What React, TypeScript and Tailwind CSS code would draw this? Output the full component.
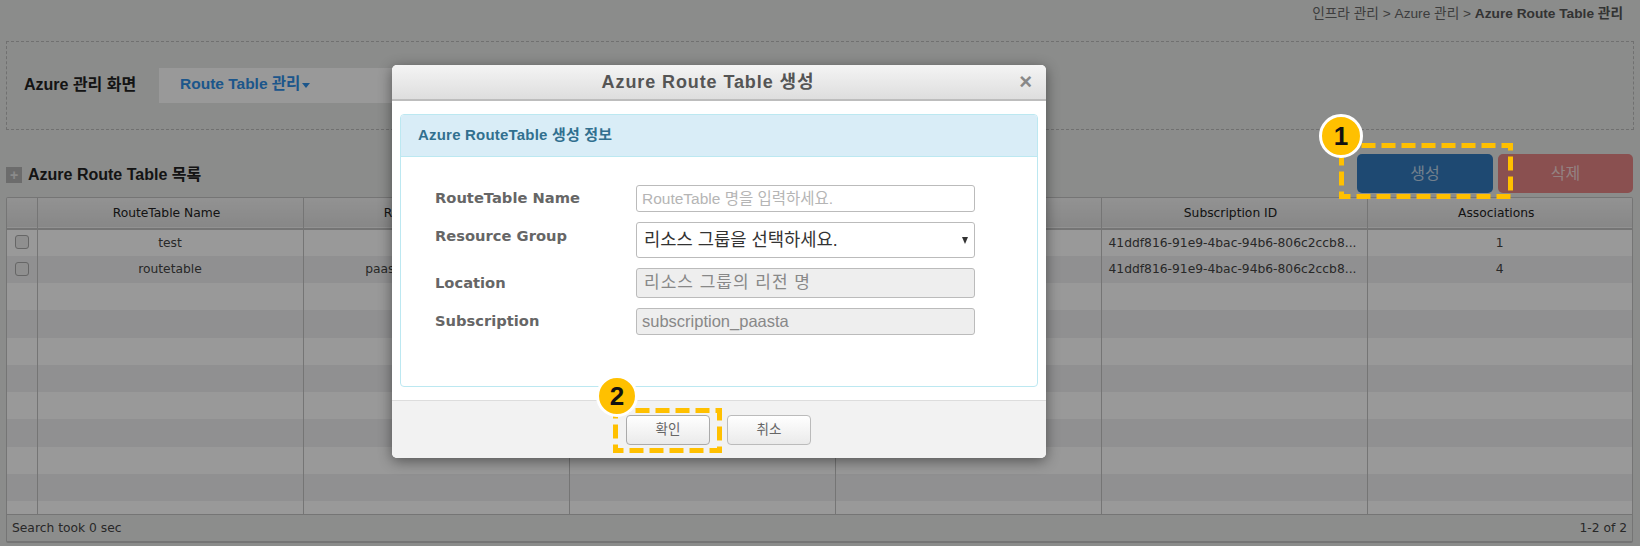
const columns = ['RouteTable Name', 'Resource Group', 'Location', 'Routes', 'Subscription ID', 'Associations'];

const rows = [
  { name: 'test', group: 'test-rg', subscription: '41ddf816-91e9-4bac-94b6-806c2ccb8...', associations: '1' },
  { name: 'routetable', group: 'paas-platform-rg-korea', subscription: '41ddf816-91e9-4bac-94b6-806c2ccb8...', associations: '4' },
];

const emptyRows = Array.from({ length: 9 }, (_, i) => i);

function Marker({ label, className }: { label: string; className: string }) {
  return (
    <div
      className={`absolute flex items-center justify-center rounded-full border-[3px] border-white bg-[#ffc000] text-[26px] font-bold leading-none text-[#111] font-['Liberation_Sans',sans-serif] ${className}`}
    >
      {label}
    </div>
  );
}

function DashedBox({ className, width, height }: { className: string; width: number; height: number }) {
  return (
    <svg className={`absolute ${className}`} width={width} height={height} fill="none">
      <rect x="2.5" y="2.5" width={width - 5} height={height - 5} stroke="#ffc000" strokeWidth="5" strokeDasharray="14 6" />
    </svg>
  );
}

function FormRow({ label, labelClass = '', children }: { label: string; labelClass?: string; children: React.ReactNode }) {
  return (
    <div className="flex items-center">
      <label className={`w-[201px] text-[14.7px] font-bold text-[#666] font-['DejaVu_Sans',sans-serif] ${labelClass}`}>{label}</label>
      {children}
    </div>
  );
}

export default function App() {
  return (
    <div className="relative h-[546px] w-[1640px] overflow-hidden bg-[#e8eae8] px-[6px] font-['DejaVu_Sans','Noto_Sans_CJK_KR',sans-serif]">
      {/* Breadcrumb */}
      <div className="h-[41px] pr-[11px] pt-[6px] text-right text-[13.7px] leading-4 text-[#666] font-['Liberation_Sans','Noto_Sans_CJK_KR',sans-serif]">
        인프라 관리 &gt; Azure 관리 &gt; <b className="text-[#555]">Azure Route Table 관리</b>
      </div>

      {/* Search box */}
      <div className="flex h-[89px] items-center border border-dashed border-[#bbb] pl-[17px] font-['Liberation_Sans','Noto_Sans_CJK_KR',sans-serif]">
        <span className="mb-[1px] w-[135px] text-[16px] font-bold text-[#222]">Azure 관리 화면</span>
        <div className="flex h-[35px] w-[860px] items-center bg-white pb-[3px] pl-[21px] text-[15.5px] font-bold text-[#3090e8]">
          Route Table 관리
          <span className="ml-[2px] mt-[3px] border-x-[4px] border-t-[5px] border-x-transparent border-t-[#3090e8]" />
        </div>
      </div>

      {/* Title and buttons */}
      <div className="flex h-[67px] items-end justify-between pb-[4px] pr-[1px] font-['Liberation_Sans','Noto_Sans_CJK_KR',sans-serif]">
        <div className="mb-[6px] flex items-center gap-[6px]">
          <span className="flex h-[16px] w-[16px] items-center justify-center bg-[#b5b5b5] text-[14px] font-bold leading-none text-[#e8e8e8]">+</span>
          <h2 className="text-[16px] font-bold text-[#222]">Azure Route Table 목록</h2>
        </div>
        <div className="flex gap-[5px]">
          <button className="h-[39px] w-[136px] rounded-[5px] bg-[#327bbf] text-[16px] text-white/70">생성</button>
          <button className="h-[39px] w-[135px] rounded-[5px] bg-[#e68585] text-[16px] text-white/70">삭제</button>
        </div>
      </div>

      {/* Table */}
      <div className="h-[346px] w-[1627px] overflow-hidden rounded-[2px] border border-b-2 border-[#c4c4c4]">
        <div className="h-[316px] overflow-hidden">
          <table className="w-full table-fixed border-collapse text-[12.3px] text-[#444]">
            <colgroup>
              <col className="w-[30px]" />
              <col className="w-[266px]" />
              <col className="w-[266px]" />
              <col className="w-[266px]" />
              <col className="w-[266px]" />
              <col className="w-[266px]" />
              <col />
            </colgroup>
            <thead>
              <tr className="h-[31px] border-b-2 border-[#c4c4c4] bg-linear-to-b from-[#f4f4f4] to-[#e2e2e2] text-[#222]">
                <th className="border-r border-[#c4c4c4]" />
                {columns.map((col) => (
                  <th key={col} className="border-r border-[#c4c4c4] pr-[7px] font-normal last:border-r-0">
                    {col}
                  </th>
                ))}
              </tr>
            </thead>
            <tbody>
              {rows.map((row, i) => (
                <tr key={row.name} className={`h-[27px] ${i % 2 ? 'bg-[#f0f1f2]' : 'bg-white'}`}>
                  <td className="border-r border-[#c4c4c4] text-center">
                    <span className="inline-block h-[14px] w-[14px] translate-y-[2px] rounded-[3px] border border-[#aaa] bg-[#eee]" />
                  </td>
                  <td className="border-r border-[#c4c4c4] text-center">{row.name}</td>
                  <td className="border-r border-[#c4c4c4] text-center">{row.group}</td>
                  <td className="border-r border-[#c4c4c4]" />
                  <td className="border-r border-[#c4c4c4]" />
                  <td className="border-r border-[#c4c4c4] pl-[7px]">{row.subscription}</td>
                  <td className="text-center">{row.associations}</td>
                </tr>
              ))}
              {emptyRows.map((i) => (
                <tr key={i} className={`h-[27.3px] ${i % 2 ? 'bg-[#f0f1f2]' : 'bg-white'}`}>
                  <td className="border-r border-[#c4c4c4]" />
                  <td className="border-r border-[#c4c4c4]" />
                  <td className="border-r border-[#c4c4c4]" />
                  <td className="border-r border-[#c4c4c4]" />
                  <td className="border-r border-[#c4c4c4]" />
                  <td className="border-r border-[#c4c4c4]" />
                  <td />
                </tr>
              ))}
            </tbody>
          </table>
        </div>
        <div className="flex h-[27px] items-center justify-between border-t border-[#c4c4c4] bg-[#eaebea] px-[5px] text-[12.3px] text-[#444]">
          <span>Search took 0 sec</span>
          <span>1-2 of 2</span>
        </div>
      </div>

      {/* Backdrop */}
      <div className="absolute inset-0 bg-black/40" />

      {/* Modal */}
      <div className="absolute left-[392px] top-[65px] flex h-[393px] w-[654px] flex-col overflow-hidden rounded-[5px] bg-white shadow-[0_3px_14px_rgba(0,0,0,0.45)] font-['Liberation_Sans','Noto_Sans_CJK_KR',sans-serif]">
        <div className="relative flex h-[36px] shrink-0 items-center justify-center border-b-2 border-[#bdbdbd] bg-linear-to-b from-[#f4f4f4] to-[#dedede] pr-[22px]">
          <h3 className="text-[18px] font-bold tracking-[0.9px] text-[#555]">Azure Route Table 생성</h3>
          <span className="absolute right-[14px] top-[5px] text-[22px] font-bold leading-6 text-[#888]">×</span>
        </div>
        <div className="flex-1 px-[8px] pt-[13px]">
          <div className="h-[273px] overflow-hidden rounded-[4px] border border-[#bce8f1]">
            <div className="flex h-[42px] items-center border-b border-[#bce8f1] bg-[#d9edf7] pl-[17px] text-[15px] font-bold tracking-[0.2px] text-[#31708f]">
              Azure RouteTable 생성 정보
            </div>
            <div className="flex flex-col gap-[10px] pl-[34px] pt-[28px]">
              <FormRow label="RouteTable Name">
                <input
                  placeholder="RouteTable 명을 입력하세요."
                  className="h-[27px] w-[339px] rounded-[3px] border border-[#bbb] px-[5px] text-[15.5px] placeholder:text-[#b5b5b5]"
                />
              </FormRow>
              <FormRow label="Resource Group" labelClass="pb-[7px]">
                <div className="flex h-[36px] w-[339px] items-center justify-between rounded-[3px] border border-[#bbb] pl-[7px] pr-[6px] text-[17.7px] text-[#333]">
                  리소스 그룹을 선택하세요.
                  <span className="border-x-[3.5px] border-t-[7px] border-x-transparent border-t-[#333]" />
                </div>
              </FormRow>
              <FormRow label="Location">
                <div className="flex h-[30px] w-[339px] items-center rounded-[3px] border border-[#bbb] bg-[#eee] pl-[7px] text-[17px] tracking-[1px] text-[#888]">
                  리소스 그룹의 리전 명
                </div>
              </FormRow>
              <FormRow label="Subscription">
                <div className="flex h-[27px] w-[339px] items-center rounded-[3px] border border-[#bbb] bg-[#eee] pl-[5px] text-[16.5px] text-[#888]">
                  subscription_paasta
                </div>
              </FormRow>
            </div>
          </div>
        </div>
        <div className="flex h-[58px] shrink-0 justify-center gap-[17px] border-t border-[#ddd] bg-[#f2f2f2] pr-[1px] pt-[14px]">
          <button className="h-[30px] w-[84px] rounded-[4px] border border-[#aaa] bg-linear-to-b from-white to-[#eaeaea] text-[13.5px] text-[#666]">확인</button>
          <button className="h-[30px] w-[84px] rounded-[4px] border border-[#bbb] bg-linear-to-b from-white to-[#eaeaea] text-[13.5px] text-[#666]">취소</button>
        </div>
      </div>

      {/* Guide annotations */}
      <DashedBox className="left-[1339px] top-[143px]" width={174} height={56} />
      <Marker label="1" className="left-[1319px] top-[114px] h-[44px] w-[44px]" />
      <DashedBox className="left-[613px] top-[408px]" width={109} height={45} />
      <Marker label="2" className="left-[596px] top-[375px] h-[42px] w-[42px]" />
    </div>
  );
}
